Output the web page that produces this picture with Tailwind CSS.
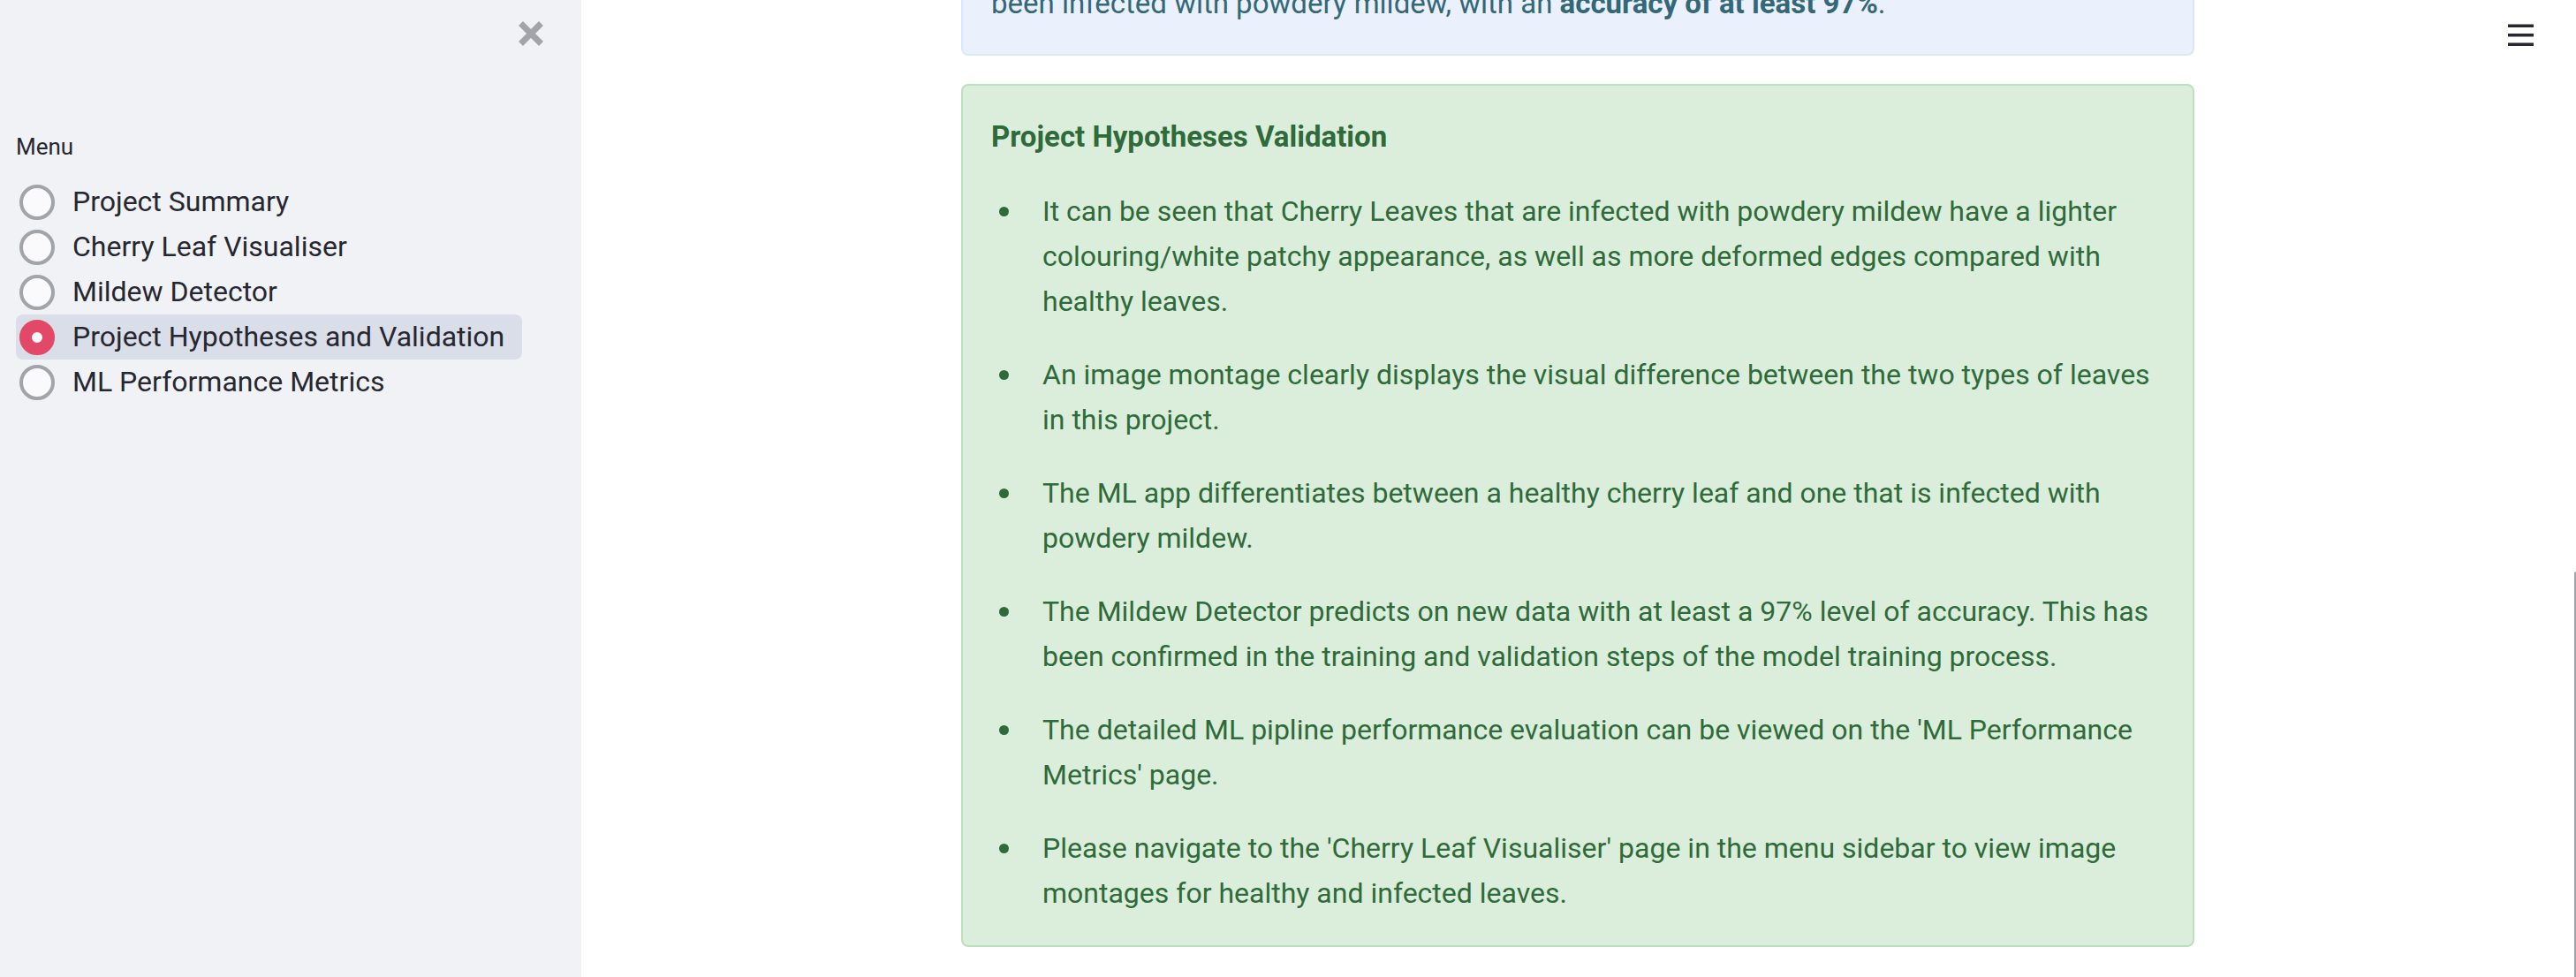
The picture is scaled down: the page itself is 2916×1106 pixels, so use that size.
<!DOCTYPE html>
<html lang="en">
<head>
<meta charset="utf-8">
<title>Project Hypotheses and Validation</title>
<script src="https://cdn.jsdelivr.net/npm/@tailwindcss/browser@4"></script>
</head>
<body class="relative flex min-h-screen overflow-x-hidden bg-white font-[Roboto,sans-serif] text-[32px] leading-[51px] text-[#262730]">
  <aside class="flex w-[658px] shrink-0 flex-col bg-[#f0f2f6]">
    <div class="flex h-[76px] items-center justify-end pr-[42px]">
      <button type="button" aria-label="Close sidebar" class="block">
        <svg class="block size-[30px]" viewBox="0 0 30 30" fill="none" stroke="#a3a4a9" stroke-width="7"><path d="M3.500 3.500 26.500 26.500M26.500 3.500 3.500 26.500"/></svg>
      </button>
    </div>
    <fieldset class="mt-[71px] px-[18px]">
      <legend class="mb-[18px] text-[26px] leading-[38px]">Menu</legend>
      <div class="flex flex-col items-start">
        <label class="flex items-center gap-5 rounded-lg pr-5 pl-1 has-checked:bg-[#dadee8]"><input type="radio" name="menu" class="size-10 appearance-none rounded-full border-4 border-[#a3a4a9] bg-[#fafafc] checked:border-[14px] checked:border-[#e24868]">Project Summary</label>
        <label class="flex items-center gap-5 rounded-lg pr-5 pl-1 has-checked:bg-[#dadee8]"><input type="radio" name="menu" class="size-10 appearance-none rounded-full border-4 border-[#a3a4a9] bg-[#fafafc] checked:border-[14px] checked:border-[#e24868]">Cherry Leaf Visualiser</label>
        <label class="flex items-center gap-5 rounded-lg pr-5 pl-1 has-checked:bg-[#dadee8]"><input type="radio" name="menu" class="size-10 appearance-none rounded-full border-4 border-[#a3a4a9] bg-[#fafafc] checked:border-[14px] checked:border-[#e24868]">Mildew Detector</label>
        <label class="flex items-center gap-5 rounded-lg pr-5 pl-1 has-checked:bg-[#dadee8]"><input type="radio" name="menu" checked class="size-10 appearance-none rounded-full border-4 border-[#a3a4a9] bg-[#fafafc] checked:border-[14px] checked:border-[#e24868]">Project Hypotheses and Validation</label>
        <label class="flex items-center gap-5 rounded-lg pr-5 pl-1 has-checked:bg-[#dadee8]"><input type="radio" name="menu" class="size-10 appearance-none rounded-full border-4 border-[#a3a4a9] bg-[#fafafc] checked:border-[14px] checked:border-[#e24868]">ML Performance Metrics</label>
      </div>
    </fieldset>
  </aside>

  <main class="min-w-0 flex-1 pr-0.5">
    <div class="mx-auto flex max-w-[1396px] flex-col gap-8">
      <section class="flex h-[63px] items-end overflow-hidden rounded-b-lg border-2 border-t-0 border-[#d9e7f8] bg-[#eaf1fc] px-8 pb-8 text-[33px] text-[#346878]">
        <p>been infected with powdery mildew, with an <strong class="font-bold">accuracy of at least 97%</strong>.</p>
      </section>
      <section class="rounded-lg border-2 border-[#bbe0bb] bg-[#dbeedb] px-8 pt-8 pb-[33px] text-[#2f6a3a]">
        <h2 class="text-[33px] font-bold">Project Hypotheses Validation</h2>
        <ul class="mt-[34px] flex flex-col gap-8">
          <li class="flex gap-[38px] pl-[9px]"><span class="mt-5 size-[11px] shrink-0 rounded-full bg-[#2f6a3a]"></span><p>It can be seen that Cherry Leaves that are infected with powdery mildew have a lighter colouring/white patchy appearance, as well as more deformed edges compared with healthy leaves.</p></li>
          <li class="flex gap-[38px] pl-[9px]"><span class="mt-5 size-[11px] shrink-0 rounded-full bg-[#2f6a3a]"></span><p>An image montage clearly displays the visual difference between the two types of leaves in this project.</p></li>
          <li class="flex gap-[38px] pl-[9px]"><span class="mt-5 size-[11px] shrink-0 rounded-full bg-[#2f6a3a]"></span><p>The ML app differentiates between a healthy cherry leaf and one that is infected with powdery mildew.</p></li>
          <li class="flex gap-[38px] pl-[9px]"><span class="mt-5 size-[11px] shrink-0 rounded-full bg-[#2f6a3a]"></span><p>The Mildew Detector predicts on new data with at least a 97% level of accuracy. This has been confirmed in the training and validation steps of the model training process.</p></li>
          <li class="flex gap-[38px] pl-[9px]"><span class="mt-5 size-[11px] shrink-0 rounded-full bg-[#2f6a3a]"></span><p>The detailed ML pipline performance evaluation can be viewed on the 'ML Performance Metrics' page.</p></li>
          <li class="flex gap-[38px] pl-[9px]"><span class="mt-5 size-[11px] shrink-0 rounded-full bg-[#2f6a3a]"></span><p>Please navigate to the 'Cherry Leaf Visualiser' page in the menu sidebar to view image montages for healthy and infected leaves.</p></li>
        </ul>
      </section>
    </div>
  </main>

  <button type="button" aria-label="Open app menu" class="absolute top-[27px] right-12">
    <svg class="block h-[25px] w-[29px]" viewBox="0 0 29 25" fill="#262730"><path d="M0 .500h29V4H0zM0 11h29v3.500H0zM0 21.500h29V25H0z"/></svg>
  </button>
  <div class="absolute right-0 bottom-0 h-[459px] w-0.5 rounded-tl-sm bg-[#a3a4a9]"></div>
</body>
</html>
